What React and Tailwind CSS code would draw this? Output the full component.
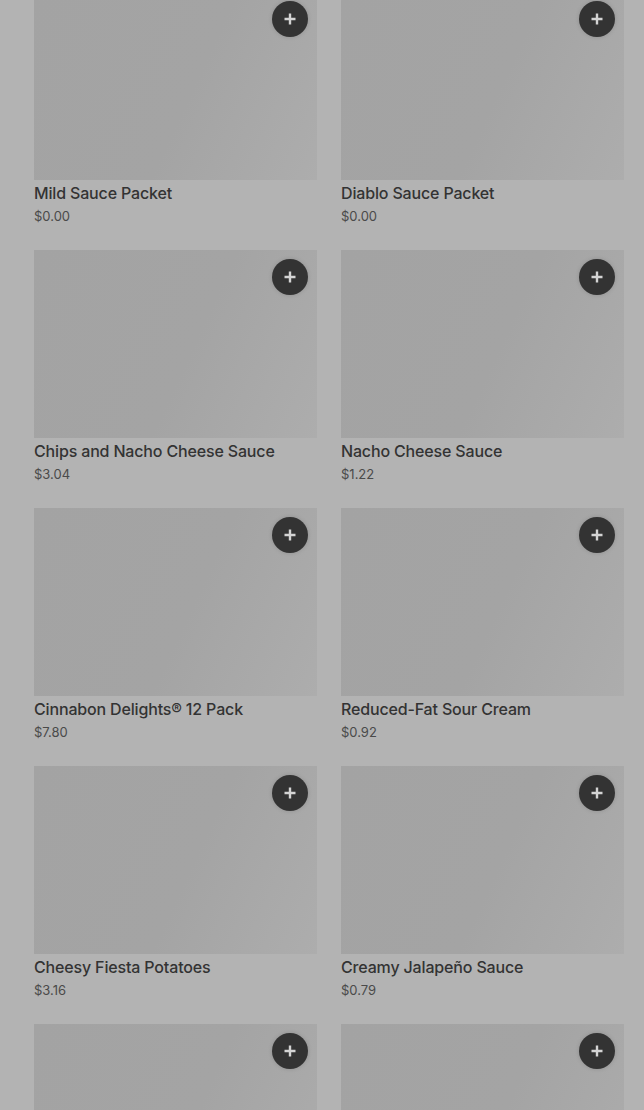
import React from 'react';

const items = [
  { name: 'Mild Sauce Packet', price: '$0.00' },
  { name: 'Diablo Sauce Packet', price: '$0.00' },
  { name: 'Chips and Nacho Cheese Sauce', price: '$3.04' },
  { name: 'Nacho Cheese Sauce', price: '$1.22' },
  { name: 'Cinnabon Delights® 12 Pack', price: '$7.80' },
  { name: 'Reduced-Fat Sour Cream', price: '$0.92' },
  { name: 'Cheesy Fiesta Potatoes', price: '$3.16' },
  { name: 'Creamy Jalapeño Sauce', price: '$0.79' },
  { name: '', price: '' },
  { name: '', price: '' },
];

const PlusIcon = () => (
  <svg width="14" height="14" viewBox="0 0 14 14" fill="none">
    <path d="M7 1.5v11M1.5 7h11" stroke="#d4d4d4" strokeWidth="2.4" />
  </svg>
);

const Card = ({ item }) => {
  return (
    <div className="flex flex-col">
      {/* Image placeholder */}
      <div className="relative h-[188px] bg-[linear-gradient(115deg,#a3a3a3_0%,#a4a4a4_55%,#adadad_100%)]">
        <button className="absolute top-[9px] right-[9px] w-9 h-9 rounded-full bg-[#333333] flex items-center justify-center shadow-[0_0_4px_rgba(0,0,0,0.15)]">
          <PlusIcon />
        </button>
      </div>
      <div className="mt-[3px] text-base leading-5 font-medium tracking-[-0.01em] text-[#333333]">
        {item.name}
      </div>
      <div className="mt-[3px] text-[13px] leading-5 text-[#4a4a4a]">
        {item.price}
      </div>
    </div>
  );
};

const App = () => {
  return (
    <div
      className="w-[644px] h-[1110px] overflow-hidden bg-[#b3b3b3]"
      style={{ fontFamily: 'Inter, "Noto Sans", sans-serif' }}
    >
      <div className="-mt-2 pl-[34px] pr-5 grid grid-cols-2 gap-x-6 gap-y-6">
        {items.map((item, i) => (
          <Card key={i} item={item} />
        ))}
      </div>
    </div>
  );
};

export default App;
